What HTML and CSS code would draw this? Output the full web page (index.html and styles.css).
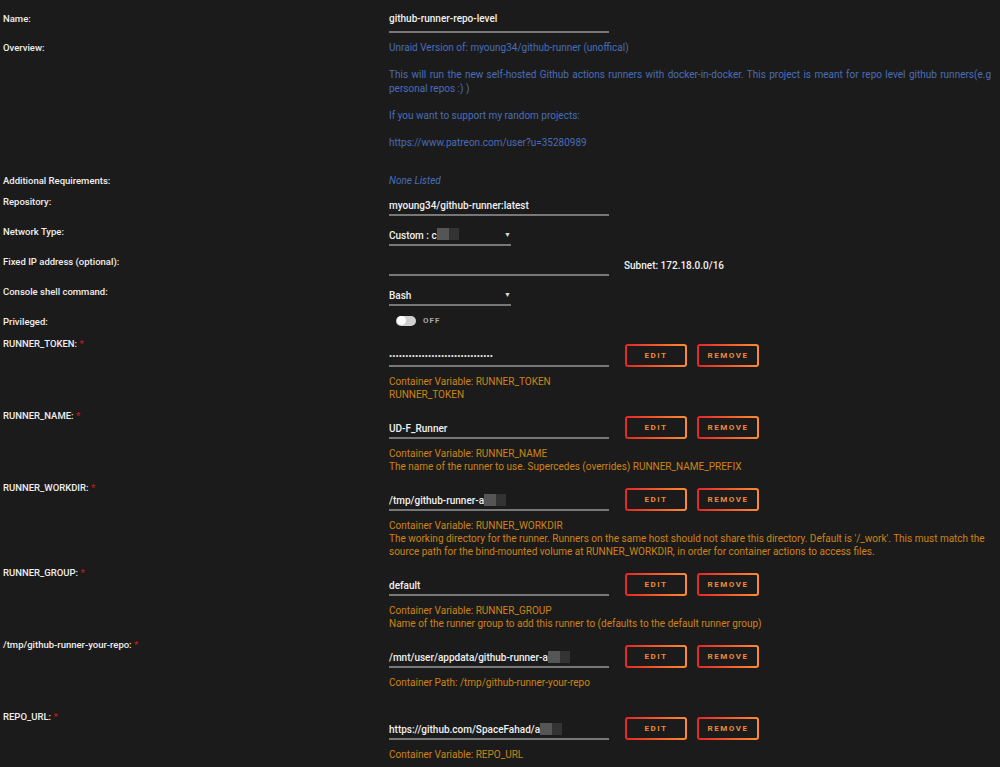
FILE: index.html
```html
<!DOCTYPE html>
<html>
<head>
<meta charset="utf-8">
<link rel="stylesheet" href="styles.css">
</head>
<body>
<div class="form">
  <div class="row r-name">
    <div class="lbl">Name:</div>
    <div class="field"><div class="input wide flat">github-runner-repo-level</div></div>
  </div>
  <div class="row r-overview">
    <div class="lbl">Overview:</div>
    <div class="field overview">
      <p>Unraid Version of: myoung34/github-runner (unoffical)</p>
      <p class="just">This will run the new self-hosted Github actions runners with docker-in-docker. This project is meant for repo level github runners(e.g personal repos :) )</p>
      <p>If you want to support my random projects:</p>
      <p>https://www.patreon.com/user?u=35280989</p>
    </div>
  </div>
  <div class="row r-req">
    <div class="lbl">Additional Requirements:</div>
    <div class="field"><span class="none">None Listed</span></div>
  </div>
  <div class="row r-simple">
    <div class="lbl">Repository:</div>
    <div class="field"><div class="input wide">myoung34/github-runner:latest</div></div>
  </div>
  <div class="row r-simple">
    <div class="lbl">Network Type:</div>
    <div class="field"><div class="input select">Custom : c<span class="redact"><span class="rd1"></span><span class="rd2"></span></span><span class="caret">▼</span></div></div>
  </div>
  <div class="row r-simple">
    <div class="lbl">Fixed IP address (optional):</div>
    <div class="field inline"><div class="input wide">&nbsp;</div><span class="subnet">Subnet: 172.18.0.0/16</span></div>
  </div>
  <div class="row r-simple">
    <div class="lbl">Console shell command:</div>
    <div class="field"><div class="input select">Bash<span class="caret">▼</span></div></div>
  </div>
  <div class="row r-priv">
    <div class="lbl">Privileged:</div>
    <div class="field toggle-wrap"><span class="toggle"><span class="knob"></span></span><span class="off">OFF</span></div>
  </div>

  <div class="row r-cfg">
    <div class="lbl">RUNNER_TOKEN: <span class="req">*</span></div>
    <div class="field cfg">
      <div class="cfg-line"><div class="input wide"><span class="dots">••••••••••••••••••••••••••••••••</span></div><button class="btn">EDIT</button><button class="btn">REMOVE</button></div>
      <div class="desc">Container Variable: RUNNER_TOKEN<br>RUNNER_TOKEN</div>
    </div>
  </div>
  <div class="row r-cfg">
    <div class="lbl">RUNNER_NAME: <span class="req">*</span></div>
    <div class="field cfg">
      <div class="cfg-line"><div class="input wide">UD-F_Runner</div><button class="btn">EDIT</button><button class="btn">REMOVE</button></div>
      <div class="desc">Container Variable: RUNNER_NAME<br>The name of the runner to use. Supercedes (overrides) RUNNER_NAME_PREFIX</div>
    </div>
  </div>
  <div class="row r-cfg">
    <div class="lbl">RUNNER_WORKDIR: <span class="req">*</span></div>
    <div class="field cfg">
      <div class="cfg-line"><div class="input wide">/tmp/github-runner-a<span class="redact"><span class="rd1"></span><span class="rd2"></span></span></div><button class="btn">EDIT</button><button class="btn">REMOVE</button></div>
      <div class="desc">Container Variable: RUNNER_WORKDIR<br>The working directory for the runner. Runners on the same host should not share this directory. Default is '/_work'. This must match the source path for the bind-mounted volume at RUNNER_WORKDIR, in order for container actions to access files.</div>
    </div>
  </div>
  <div class="row r-cfg">
    <div class="lbl">RUNNER_GROUP: <span class="req">*</span></div>
    <div class="field cfg">
      <div class="cfg-line"><div class="input wide">default</div><button class="btn">EDIT</button><button class="btn">REMOVE</button></div>
      <div class="desc">Container Variable: RUNNER_GROUP<br>Name of the runner group to add this runner to (defaults to the default runner group)</div>
    </div>
  </div>
  <div class="row r-cfg">
    <div class="lbl">/tmp/github-runner-your-repo: <span class="req">*</span></div>
    <div class="field cfg">
      <div class="cfg-line"><div class="input wide">/mnt/user/appdata/github-runner-a<span class="redact"><span class="rd1"></span><span class="rd2"></span></span></div><button class="btn">EDIT</button><button class="btn">REMOVE</button></div>
      <div class="desc">Container Path: /tmp/github-runner-your-repo<br>&nbsp;</div>
    </div>
  </div>
  <div class="row r-cfg">
    <div class="lbl">REPO_URL: <span class="req">*</span></div>
    <div class="field cfg">
      <div class="cfg-line"><div class="input wide">https://github.com/SpaceFahad/a<span class="redact"><span class="rd1"></span><span class="rd2"></span></span></div><button class="btn">EDIT</button><button class="btn">REMOVE</button></div>
      <div class="desc">Container Variable: REPO_URL</div>
    </div>
  </div>
</div>
</body>
</html>
```
FILE: styles.css
```css
html, body {
  margin: 0;
  background: #1c1b1b;
  height: 100%;
  overflow: hidden;
}
body {
  font-family: Roboto, "Liberation Sans", sans-serif;
  font-size: 10px;
  color: #f2f2f2;
}
.form {
  padding: 11.5px 0 0 3px;
}
.row {
  display: flex;
  align-items: flex-start;
}
.lbl {
  width: 386px;
  flex: none;
  line-height: 13px;
  font-size: 9.5px;
  font-weight: 500;
  color: #eeeeee;
}
.field {
  line-height: 13px;
}
.input {
  color: #f0f0f0;
  font-weight: 500;
  padding: 4px 0 2.5px 0;
  border-bottom: 2px solid #777;
  box-sizing: content-box;
  white-space: nowrap;
}
.input.flat {
  padding-top: 0;
  padding-bottom: 6.5px;
}
.input.wide { width: 220px; }
.input.select {
  width: 122px;
  display: flex;
  align-items: center;
}
.caret {
  margin-left: auto;
  margin-right: 0;
  font-size: 7px;
  color: #ddd;
}
.redact {
  display: inline-flex;
  height: 12px;
  vertical-align: middle;
  margin-top: -2px;
}
.rd1 { width: 12px; background: #555; }
.rd2 { width: 10px; background: #333; }

.r-name { margin-bottom: 7.5px; }
.r-overview { margin-bottom: 23.5px; }
.overview {
  color: #486dba;
  line-height: 13.7px;
  width: 602px;
}
.overview p { margin: 0 0 13.7px 0; }
.overview p:last-child { margin-bottom: 0; }
.overview .just { text-align: justify; }
.r-req { margin-bottom: 8px; }
.none { color: #486dba; font-style: italic; }
.r-simple { margin-bottom: 8.5px; }
.field.inline {
  display: flex;
  align-items: flex-end;
}
.subnet {
  margin-left: 15px;
  padding-bottom: 4.5px;
  font-weight: 500;
}
.r-priv { margin-bottom: 9px; }
.toggle-wrap {
  display: flex;
  align-items: center;
  height: 12px;
  padding-left: 7px;
}
.toggle {
  width: 20px;
  height: 10px;
  border-radius: 5px;
  background: #cfcfcf;
  display: flex;
  align-items: center;
  padding-left: 1px;
  box-sizing: border-box;
}
.knob {
  width: 9px;
  height: 9px;
  border-radius: 50%;
  background: #fff;
}
.off {
  margin-left: 7px;
  font-size: 8px;
  font-weight: 700;
  letter-spacing: 1px;
  color: #a8a8a8;
}

.r-cfg { margin-bottom: 8px; }
.field.cfg { padding-top: 7.5px; }
.cfg-line {
  display: flex;
  align-items: flex-end;
}
.dots {
  font-size: 9px;
  letter-spacing: 0.1px;
  color: #e8e8e8;
}
.btn {
  font-family: Roboto, "Liberation Sans", sans-serif;
  width: 62px;
  height: 23px;
  margin-left: 10px;
  padding: 0;
  border: 2px solid transparent;
  border-radius: 3px;
  background:
    linear-gradient(#1c1b1b, #1c1b1b) padding-box,
    linear-gradient(90deg, #e22828, #ff8c2f) border-box;
  color: #f08a34;
  font-size: 8px;
  font-weight: 700;
  letter-spacing: 1.5px;
  text-align: center;
}
.input + .btn { margin-left: 16px; }
.desc {
  margin-top: 7.5px;
  color: #cc8416;
  width: 600px;
}
.req { color: #c41a1a; }
```
